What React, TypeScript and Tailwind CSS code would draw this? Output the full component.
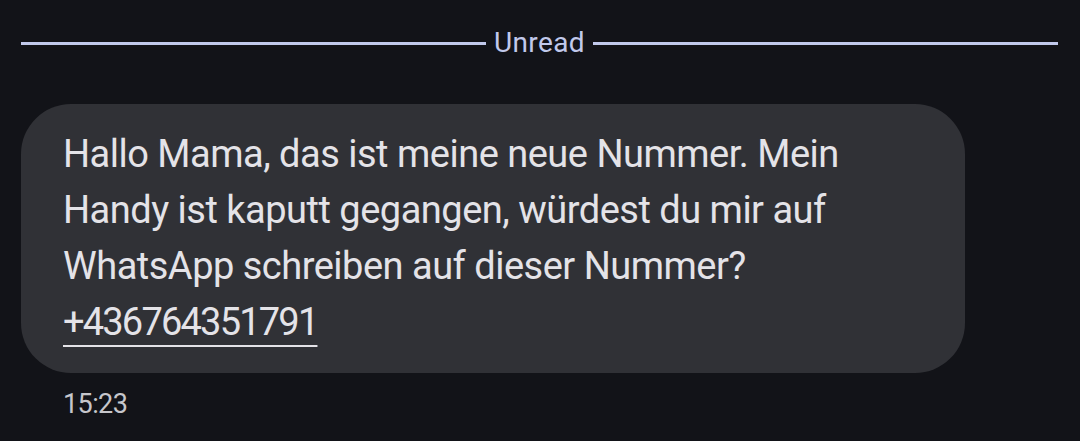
export default function App() {
    return (
        <div className="w-[1080px] h-[441px] bg-[#121318] overflow-hidden" style={{ fontFamily: 'Roboto, "Noto Sans", sans-serif' }}>
            <div className="flex items-center pl-[21px] pr-[22px] pt-[26px]">
                <div className="flex-1 h-[3px] bg-[#c1c9eb]" />
                <span className="px-[8px] text-[28px] leading-[34px] tracking-[0.4px] text-[#c1c9eb]">Unread</span>
                <div className="flex-1 h-[3px] bg-[#c1c9eb]" />
            </div>
            <div className="ml-[21px] mt-[44px] w-[944px] h-[269px] rounded-[50px] bg-[#303136] pl-[42px] pr-[30px] pt-[22px]">
                <p className="text-[38px] leading-[56px] text-[#e4e3e8] tracking-[-0.5px]">
                    Hallo Mama, das ist meine neue Nummer. Mein Handy ist kaputt gegangen, würdest du mir auf WhatsApp schreiben auf dieser Nummer?{' '}
                    <span className="underline decoration-2 underline-offset-[10px] tracking-[-1.8px]">+436764351791</span>
                </p>
            </div>
            <div className="pl-[63px] pt-[14px] text-[27px] leading-[34px] tracking-[-0.6px] text-[#c6c6cb]">15:23</div>
        </div>
    );
}
